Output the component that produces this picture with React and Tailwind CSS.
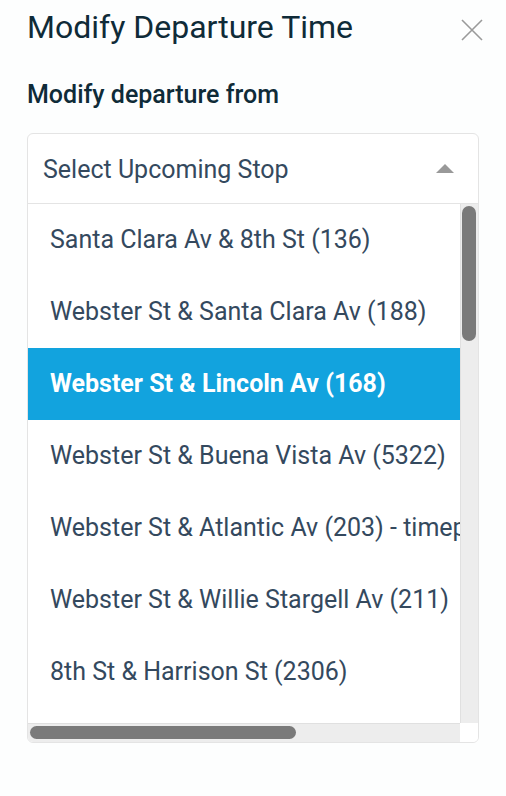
import React from "react";

const stops = [
  "Santa Clara Av & 8th St (136)",
  "Webster St & Santa Clara Av (188)",
  "Webster St & Lincoln Av (168)",
  "Webster St & Buena Vista Av (5322)",
  "Webster St & Atlantic Av (203) - timepoint",
  "Webster St & Willie Stargell Av (211)",
  "8th St & Harrison St (2306)",
];

export default function App() {
  return (
    <div className="w-[506px] h-[796px] bg-[#fdfefe] overflow-hidden" style={{ fontFamily: "Roboto, 'Liberation Sans', sans-serif" }}>
      <div className="flex items-start justify-between pl-[27px] pr-[22px] pt-[8px]">
        <h1 className="text-[32px] leading-[38px] text-[#0f2b38] font-normal whitespace-nowrap">Modify Departure Time</h1>
        <svg width="24" height="24" viewBox="0 0 24 24" className="mt-[10px]">
          <path d="M2 2 L22 22 M22 2 L2 22" stroke="#9a9a9a" strokeWidth="1.6" fill="none" />
        </svg>
      </div>
      <div className="pl-[27px] pt-[34px] text-[25px] leading-[30px] font-medium text-[#0f2b38]">Modify departure from</div>
      <div className="mx-[27px] mt-[23px] w-[452px] rounded-[6px] border border-[#e4e4e4] bg-white overflow-hidden">
        <div className="h-[70px] flex items-center justify-between pl-[15px] pr-[24px] border-b border-[#e4e4e4]">
          <span className="text-[25px] leading-[30px] text-[#34495e] mt-[3px]">Select Upcoming Stop</span>
          <svg width="18" height="9" viewBox="0 0 18 9">
            <path d="M0 9 L9 0 L18 9 Z" fill="#999999" />
          </svg>
        </div>
        <div className="flex">
          <div className="flex-1 min-w-0 flex flex-col">
            <div className="h-[519px] overflow-hidden">
              {stops.map((s, i) => (
                <div
                  key={s}
                  className={
                    i === 2
                      ? "h-[72px] flex items-center pl-[22px] whitespace-nowrap text-[25px] leading-[30px] font-bold text-white bg-[#12a3de]"
                      : "h-[72px] flex items-center pl-[22px] whitespace-nowrap text-[25px] leading-[30px] text-[#34495e]"
                  }
                >
                  {s}
                </div>
              ))}
            </div>
            <div className="h-[19px] bg-[#ededed] border-t border-[#e0e0e0] pl-[2px] pt-[2px]">
              <div className="w-[266px] h-[13px] rounded-full bg-[#7a7a7a]" />
            </div>
          </div>
          <div className="w-[18px] flex flex-col">
            <div className="h-[519px] bg-[#ededed] border-l border-[#e0e0e0] pt-[2px] pl-[1px] pr-[2px]">
              <div className="w-[14px] h-[135px] rounded-full bg-[#7a7a7a]" />
            </div>
            <div className="h-[19px] bg-white" />
          </div>
        </div>
      </div>
    </div>
  );
}
